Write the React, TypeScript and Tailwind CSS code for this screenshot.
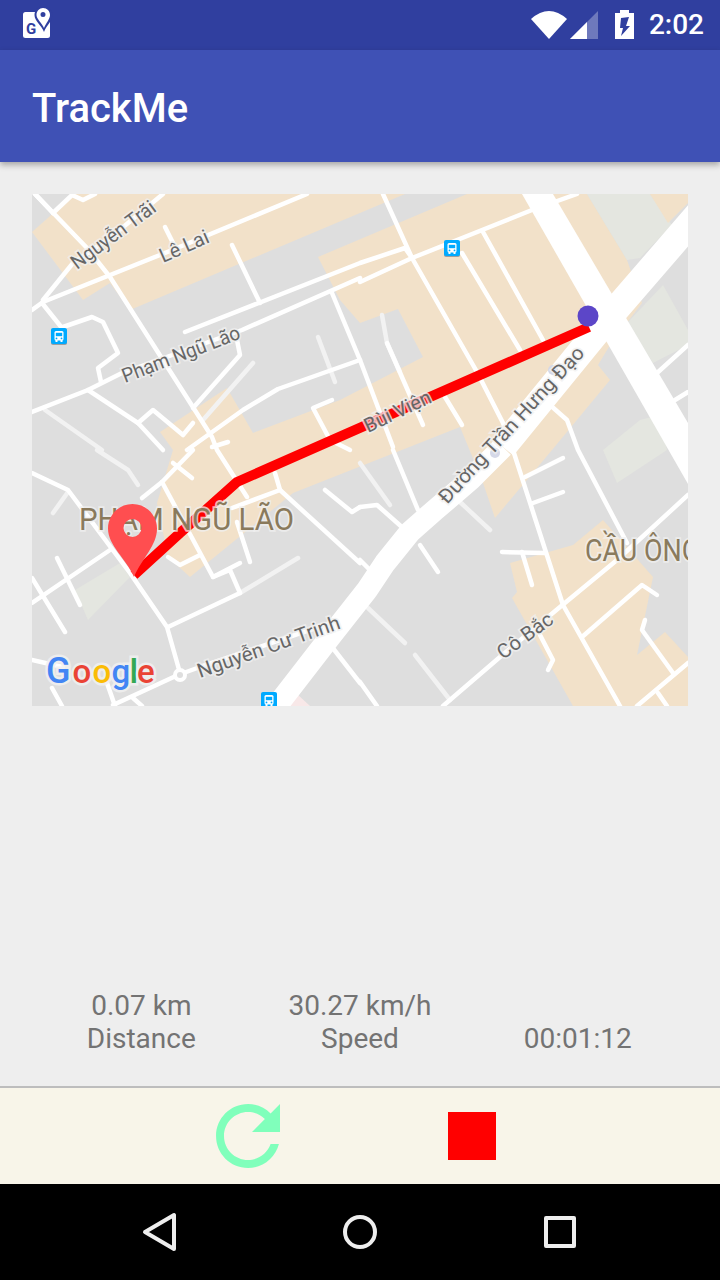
const font = { fontFamily: 'Roboto, "Noto Sans", sans-serif' };

const beige = [
  "32,232 75,194 405,194 130,310 110,283 83,300",
  "318,257 467,194 587,194 627,260 642,303 610,345 598,365 610,380 552,450 495,518 482,480 460,427 293,493 190,577 168,557 157,503 173,450 160,432 227,388 253,433 340,400 423,357 398,309 360,323 340,300",
  "510,563 573,545 603,520 653,577 637,655 665,632 688,657 688,706 573,706 512,598 517,592",
];
const green = [
  "587,194 650,194 672,225 640,258 627,260",
  "627,323 663,285 688,330 688,345 653,363",
  "603,450 617,483 667,450 660,415 640,420",
  "75,590 120,563 130,577 88,620",
];
const lightRoads = [
  "253,363 203,420",
  "318,337 335,382",
  "382,315 387,343 400,372",
  "68,492 53,513",
  "240,593 298,558",
  "97,450 128,470 138,485",
  "45,410 102,450",
  "360,463 390,505",
  "460,502 490,530",
  "368,608 405,643",
  "415,655 450,700",
];
const whiteRoads = [
  "35,194 87,248 110,277 212,437 217,450 247,497",
  "43,300 73,263 110,238 163,194",
  "53,213 72,195 83,200 95,194",
  "53,213 35,194",
  "32,310 43,302 160,255 307,194",
  "165,227 173,243",
  "232,245 260,303",
  "185,332 360,263 405,248 412,258",
  "360,282 412,258 532,210 577,194",
  "32,412 88,390 122,373 242,330 360,278",
  "42,303 62,328",
  "63,327 92,317 103,322 118,353 98,368 101,382",
  "88,390 138,423 163,450",
  "138,423 153,410 183,435 193,423",
  "193,408 240,355 237,340",
  "187,450 243,410 278,389 360,360",
  "332,293 360,360 393,447",
  "332,400 313,408 330,440 350,450",
  "212,447 228,442",
  "383,194 412,258 477,372 503,423 513,450 563,605 620,706",
  "462,253 520,350",
  "483,232 543,340",
  "387,343 423,425",
  "445,397 462,425",
  "550,405 567,420 578,450 627,543",
  "657,373 688,345",
  "675,400 688,392",
  "525,477 563,458",
  "533,503 563,492",
  "502,552 545,553",
  "522,552 532,585",
  "443,706 500,657 560,607 617,560 688,495",
  "540,635 553,660 548,670",
  "582,637 642,585 657,595",
  "645,620 642,630 673,673",
  "637,706 688,663",
  "658,693 667,706",
  "360,507 377,505 403,528",
  "393,450 418,510",
  "420,545 438,572",
  "360,560 372,572",
  "360,682 377,706",
  "32,473 68,490 130,573 167,627 180,673",
  "32,603 110,550",
  "57,558 80,605",
  "32,578 65,632",
  "168,627 240,593",
  "240,593 230,570 213,577 162,482",
  "213,577 240,563",
  "142,498 162,482 193,450",
  "173,463 192,478",
  "168,557 180,565 200,555",
  "237,522 250,562",
  "232,508 280,490 275,473",
  "280,490 360,563",
  "325,490 352,512 360,507",
  "32,660 63,667",
  "52,688 62,706",
  "107,683 115,706",
  "133,698 142,706",
  "332,647 360,683",
  "113,705 178,675 200,667 345,618",
];
const labels: [string, number, number, number, number][] = [
  ["Nguyễn Trãi", 77, 270, -36.5, 100],
  ["Lê Lai", 163, 263, -24, 52],
  ["Phạm Ngũ Lão", 125, 383, -21, 125],
  ["Bùi Viện", 368, 433, -25.5, 72],
  ["Đường Trần Hưng Đạo", 447, 505, -47.5, 205],
  ["Nguyễn Cư Trinh", 200, 678, -19.4, 150],
  ["Cô Bắc", 503, 660, -36, 64],
];

function Bus({ x, y }: { x: number; y: number }) {
  return (
    <g transform={`translate(${x} ${y})`}>
      <rect x="0" y="1" width="16" height="16" rx="2" fill="#9e9e9e" />
      <rect width="16" height="16" rx="2" fill="#00aaff" />
      <rect x="3.5" y="3" width="9" height="9.5" rx="1.5" fill="#ffffff" />
      <rect x="4.8" y="4.8" width="6.4" height="3.4" fill="#00aaff" />
      <rect x="4.5" y="12" width="2" height="2" fill="#ffffff" />
      <rect x="9.5" y="12" width="2" height="2" fill="#ffffff" />
      <circle cx="5.5" cy="10.4" r="0.9" fill="#00aaff" />
      <circle cx="10.5" cy="10.4" r="0.9" fill="#00aaff" />
    </g>
  );
}

function MapView() {
  return (
    <svg viewBox="32 194 656 512" className="block w-[656px] h-[512px]" style={font}>
      <rect x="32" y="194" width="656" height="512" fill="#dedede" />
      {beige.map((p) => <polygon key={p} points={p} fill="#f2e1c9" />)}
      {green.map((p) => <polygon key={p} points={p} fill="#e4e6e0" />)}
      <polygon points="650,194 688,194 688,203 668,223" fill="#f2e1c9" />
      <polygon points="287,706 297,694 310,706" fill="#f8e8e8" />
      {lightRoads.map((p) => (
        <polyline key={p} points={p} fill="none" stroke="#f2f2f2" strokeWidth="4.5" strokeLinecap="round" strokeLinejoin="round" />
      ))}
      {whiteRoads.map((p) => (
        <polyline key={p} points={p} fill="none" stroke="#ffffff" strokeWidth="4.5" strokeLinecap="round" strokeLinejoin="round" />
      ))}
      <polygon points="522,194 553,194 688,423 688,484" fill="#ffffff" />
      <polyline points="700,212 605,322 503,447" fill="none" stroke="#ffffff" strokeWidth="27" />
      <polyline points="503,447 470,480 435,510 410,532 385,563 367,590 330,637 272,712" fill="none" stroke="#ffffff" strokeWidth="22" strokeLinejoin="round" />
      <circle cx="180" cy="675" r="7" fill="#ffffff" />
      <circle cx="180" cy="675" r="3" fill="#dedede" />
      <circle cx="553" cy="370" r="5" fill="#d5d8e8" />
      <circle cx="495" cy="453" r="5" fill="#d5d8e8" />
      <polyline points="134,575 180,533 237,482 589,327" fill="none" stroke="#ff0000" strokeWidth="10" strokeLinejoin="round" />
      {labels.map(([t, x, y, a, len]) => (
        <text
          key={t}
          x={x}
          y={y}
          transform={`rotate(${a} ${x} ${y})`}
          fontSize="20"
          textLength={len}
          lengthAdjust="spacingAndGlyphs"
          fill="#666666"
          stroke="#f0f0f0"
          strokeOpacity="0.75"
          strokeWidth="3.5"
          paintOrder="stroke"
        >
          {t}
        </text>
      ))}
      <text x="79" y="530" fontSize="31" textLength="215" lengthAdjust="spacingAndGlyphs" fill="#8a7a5c" stroke="#f0f0f0" strokeOpacity="0.75" strokeWidth="3.5" paintOrder="stroke">
        PHẠM NGŨ LÃO
      </text>
      <text x="585" y="561" fontSize="31" textLength="115" lengthAdjust="spacingAndGlyphs" fill="#8a7a5c" stroke="#f0f0f0" strokeOpacity="0.75" strokeWidth="3.5" paintOrder="stroke">
        CẦU ÔNG
      </text>
      <path
        fillRule="evenodd"
        fill="#ff4e50"
        d="M132.500 504c13.500 0 24.500 11 24.500 24.500 0 17-15 30-23 48.500-8-18.500-26-31.500-26-48.500 0-13.500 11-24.500 24.500-24.500zM132.500 519a9 9 0 1 0 0 18a9 9 0 1 0 0-18z"
      />
      <circle cx="588" cy="316" r="10.500" fill="#5c46c8" />
      <Bus x={51} y={328} />
      <Bus x={444} y={240} />
      <Bus x={261} y={692} />
      <text y="683" fontWeight="500" stroke="#f0f0f0" strokeOpacity="0.85" strokeWidth="5" paintOrder="stroke">
        <tspan x="46" fontSize="36" fill="#4285f4">G</tspan>
        <tspan x="72.500" fontSize="33" fill="#ea4335">o</tspan>
        <tspan x="92.500" fontSize="33" fill="#fbbc05">o</tspan>
        <tspan x="111.500" fontSize="33" fill="#4285f4">g</tspan>
        <tspan x="129.500" fontSize="34" fill="#34a853">l</tspan>
        <tspan x="137" fontSize="33" fill="#ea4335">e</tspan>
      </text>
    </svg>
  );
}

function StatusIcons() {
  return (
    <svg viewBox="530 0 108 50" className="w-[108px] h-[50px]">
      <path d="M532 19Q550 3 568 19L550 39Z" fill="#ffffff" />
      <polygon points="571,39 599,11 599,39" fill="#ffffff" fillOpacity="0.3" />
      <polygon points="571,39 588,22 588,39" fill="#ffffff" />
      <path
        fillRule="evenodd"
        fill="#ffffff"
        d="M621 10h9v3h5v26h-19v-26h5zM622 18l8-1-3 9h4l-9 10 2-8h-3z"
      />
    </svg>
  );
}

function NoteIcon() {
  return (
    <svg viewBox="20 4 34 36" className="w-[34px] h-[36px]" style={font}>
      <rect x="23" y="12" width="27" height="26" rx="2.500" fill="#ffffff" />
      <text x="26" y="34" fontSize="15" fontWeight="700" fill="#303f9f">G</text>
      <path d="M43 6c5 0 9.500 4 9.500 9 0 6-6 10-8.500 17-2.500-7-9.500-11-9.500-17 0-5 4-9 8.500-9z" fill="#303f9f" />
      <path fillRule="evenodd" d="M43 8c4 0 7 3 7 7 0 4-4 8-6 13-2-5-7.500-9-7.500-13 0-4 3-7 6.500-7zM43 12a2.500 2.500 0 1 0 0 5a2.500 2.500 0 1 0 0-5z" fill="#ffffff" />
    </svg>
  );
}

export default function App() {
  return (
    <div className="w-[720px] h-[1280px] flex flex-col bg-[#eeeeee] overflow-hidden" style={font}>
      <div className="h-[50px] bg-[#303f9f] flex items-center justify-between shrink-0">
        <div className="ml-[20px] -mt-[6px]"><NoteIcon /></div>
        <div className="flex items-center">
          <StatusIcons />
          <span className="ml-[12px] mr-[16px] text-white text-[28px] font-medium leading-[50px]">2:02</span>
        </div>
      </div>
      <div className="h-[112px] bg-[#3f51b5] flex items-center pl-[32px] pt-[5px] shadow-[0_3px_6px_rgba(0,0,0,0.3)] shrink-0 z-10">
        <span className="text-white text-[40px] font-medium">TrackMe</span>
      </div>
      <div className="mt-[32px] mx-[32px] shrink-0">
        <MapView />
      </div>
      <div className="flex-1 flex flex-col justify-end">
        <div className="grid grid-cols-3 px-[32px] items-end text-center text-[#737373] text-[28px] leading-[33px] mb-[31px]">
          <div>
            <div>0.07 km</div>
            <div>Distance</div>
          </div>
          <div>
            <div>30.27 km/h</div>
            <div>Speed</div>
          </div>
          <div className="-ml-[2px]">00:01:12</div>
        </div>
        <div className="h-[98px] border-t-2 border-[#bdbdbd] bg-[#f8f5e9] flex items-center">
          <svg viewBox="4 4 16 16" className="ml-[216px] w-[64px] h-[64px] block">
            <path
              fill="#80ffbb"
              d="M17.650 6.350C16.200 4.900 14.210 4 12 4c-4.420 0-7.990 3.580-7.990 8s3.570 8 7.990 8c3.730 0 6.840-2.550 7.730-6h-2.080c-.820 2.330-3.040 4-5.650 4-3.310 0-6-2.690-6-6s2.690-6 6-6c1.660 0 3.140.690 4.220 1.780L13 11h7V4l-2.350 2.350z"
            />
          </svg>
          <div className="ml-[168px] w-[48px] h-[48px] bg-[#ff0000]" />
        </div>
      </div>
      <div className="h-[96px] bg-black flex items-center shrink-0">
        <svg viewBox="0 0 40 44" className="ml-[140px] w-[40px] h-[44px] block">
          <path d="M5 22L34 5V39Z" fill="none" stroke="#eeeeee" strokeWidth="4" strokeLinejoin="round" />
        </svg>
        <div className="ml-[163px] w-[34px] h-[34px] rounded-full border-4 border-[#eeeeee]" />
        <div className="ml-[167px] w-[32px] h-[32px] rounded-[2px] border-4 border-[#eeeeee]" />
      </div>
    </div>
  );
}
